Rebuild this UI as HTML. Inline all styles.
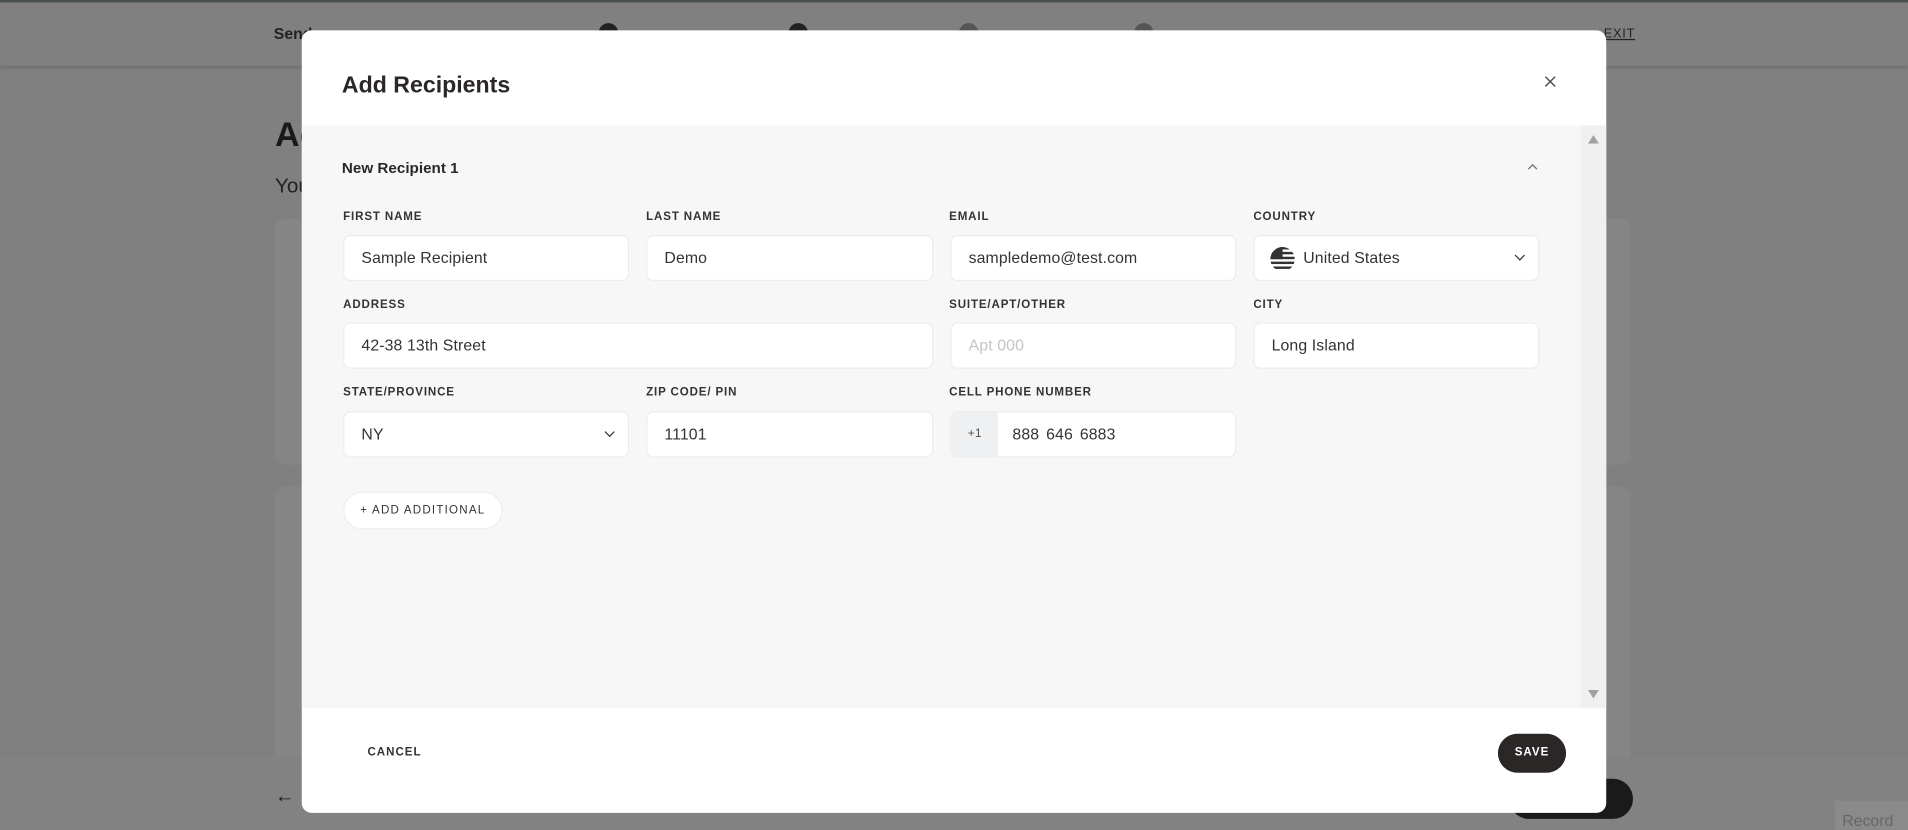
<!DOCTYPE html>
<html><head><meta charset="utf-8"><style>
*{box-sizing:border-box;margin:0;padding:0}
html,body{width:1908px;height:830px;overflow:hidden;background:#808080}
#w{position:absolute;left:0;top:0;width:1568px;height:682px;transform:scale(1.21684);transform-origin:0 0;font-family:"Liberation Sans",sans-serif;color:#2b2727;background:#808080}
.a{position:absolute}
.top{left:0;top:0;width:1568px;height:54px;background:#808080;border-top:2px solid #4a4f4f;box-shadow:0 2px 3px rgba(0,0,0,.15)}
.modal{left:248px;top:25px;width:1072px;height:643px;background:#fff;border-radius:8px;overflow:hidden}
.body{left:0;top:78px;width:1072px;height:479px;background:#f7f7f7}
.sb{left:1051px;top:0;width:21px;height:479px;background:#f0f0f0}
.lbl{position:absolute;font-size:9.5px;font-weight:bold;letter-spacing:.7px;color:#333}
.inp{position:absolute;height:38px;background:#fff;border:1px solid #ececec;border-radius:6px;font-size:13px;color:#333;padding-left:14px;line-height:36px;letter-spacing:.1px}
.chev{position:absolute;right:12px;top:15px;width:6px;height:6px;border-right:1.3px solid #333;border-bottom:1.3px solid #333;transform:rotate(45deg)}
</style></head><body><div id="w">
<div class="a top"></div>
<div class="a" style="left:225px;top:20px;font-size:13px;font-weight:bold;color:#222">Send</div>
<div class="a" style="left:492px;top:19px;width:16px;height:16px;border-radius:50%;background:#222"></div>
<div class="a" style="left:648px;top:19px;width:16px;height:16px;border-radius:50%;background:#222"></div>
<div class="a" style="left:788px;top:19px;width:16px;height:16px;border-radius:50%;background:#555"></div>
<div class="a" style="left:932px;top:19px;width:16px;height:16px;border-radius:50%;background:#555"></div>
<div class="a" style="left:1318px;top:22px;font-size:10.5px;letter-spacing:.6px;text-decoration:underline;color:#222">EXIT</div>
<div class="a" style="left:226px;top:95px;font-size:28px;font-weight:bold;color:#1a1a1a">Ad</div>
<div class="a" style="left:226px;top:143px;font-size:17px;color:#222">You</div>
<div class="a" style="left:226px;top:180px;width:1114px;height:202px;background:#858585;border-radius:8px"></div>
<div class="a" style="left:226px;top:400px;width:1114px;height:230px;background:#858585;border-radius:8px"></div>
<div class="a" style="left:0;top:622px;width:1568px;height:60px;background:#828282"></div>
<div class="a" style="left:226px;top:646px;font-size:16px;color:#111">&larr;</div>
<div class="a" style="left:1240px;top:640px;width:102px;height:33px;border-radius:17px;background:#1a1a1a"></div>
<div class="a" style="left:1508px;top:658px;width:60px;height:24px;background:#8a8a8a;color:#666;font-size:13px;padding:9px 0 0 6px">Record</div>

<div class="a modal">
 <div class="a" style="left:33px;top:35px;font-size:19px;font-weight:bold;color:#2b2727">Add Recipients</div>
 <svg class="a" style="left:1021px;top:37px" width="10" height="10" viewBox="0 0 10 10"><path d="M1 1L9 9M9 1L1 9" stroke="#444" stroke-width="1.1"/></svg>
 <div class="a body">
  <div class="a sb"><svg class="a" style="left:6px;top:8px" width="9" height="7"><path d="M0 7L4.5 0L9 7Z" fill="#a0a0a0"/></svg><svg class="a" style="left:6px;top:464px" width="9" height="7"><path d="M0 0L4.5 7L9 0Z" fill="#a0a0a0"/></svg></div>
  <div class="a" style="left:33px;top:28px;font-size:12.5px;font-weight:bold;color:#2b2727">New Recipient 1</div>
  <svg class="a" style="left:1007px;top:31px" width="9" height="6"><path d="M1 5L4.5 1.5L8 5" stroke="#777" stroke-width="1.1" fill="none"/></svg>
 </div>
</div>

<div class="lbl" style="left:282px;top:173px">FIRST NAME</div>
<div class="lbl" style="left:531px;top:173px">LAST NAME</div>
<div class="lbl" style="left:780px;top:173px">EMAIL</div>
<div class="lbl" style="left:1030px;top:173px">COUNTRY</div>
<div class="inp" style="left:282px;top:193px;width:235px">Sample Recipient</div>
<div class="inp" style="left:531px;top:193px;width:236px">Demo</div>
<div class="inp" style="left:781px;top:193px;width:235px">sampledemo@test.com</div>
<div class="inp" style="left:1030px;top:193px;width:235px;padding-left:40px">United States
 <svg class="a" style="left:13px;top:9px" width="20" height="20" viewBox="0 0 20 20"><clipPath id="c"><circle cx="10" cy="10" r="10"/></clipPath><g clip-path="url(#c)"><rect width="20" height="20" fill="#fff"/><g fill="#333"><rect y="0" width="20" height="2"/><rect y="4" width="20" height="2"/><rect y="8" width="20" height="2"/><rect y="12" width="20" height="2"/><rect y="16" width="20" height="2"/><rect width="10" height="10"/></g></g></svg>
 <div class="chev" style="top:13px"></div></div>

<div class="lbl" style="left:282px;top:245px">ADDRESS</div>
<div class="lbl" style="left:780px;top:245px">SUITE/APT/OTHER</div>
<div class="lbl" style="left:1030px;top:245px">CITY</div>
<div class="inp" style="left:282px;top:265px;width:485px">42-38 13th Street</div>
<div class="inp" style="left:781px;top:265px;width:235px;color:#c4c4c4">Apt 000</div>
<div class="inp" style="left:1030px;top:265px;width:235px">Long Island</div>

<div class="lbl" style="left:282px;top:317px">STATE/PROVINCE</div>
<div class="lbl" style="left:531px;top:317px">ZIP CODE/ PIN</div>
<div class="lbl" style="left:780px;top:317px">CELL PHONE NUMBER</div>
<div class="inp" style="left:282px;top:338px;width:235px">NY<div class="chev" style="top:13px"></div></div>
<div class="inp" style="left:531px;top:338px;width:236px">11101</div>
<div class="inp" style="left:781px;top:338px;width:235px;padding-left:50px;overflow:hidden;word-spacing:2px">888 646 6883
 <div class="a" style="left:0;top:0;width:38px;height:38px;background:#eff0f1;font-size:10px;color:#555;text-align:center;line-height:36px;word-spacing:0">+1</div></div>

<div class="a" style="left:282px;top:404px;width:131px;height:31px;border-radius:16px;background:#fff;border:1px solid #eee;font-size:9.5px;letter-spacing:1px;color:#333;text-align:center;line-height:29px">+ ADD ADDITIONAL</div>

<div class="a" style="left:302px;top:613px;font-size:9.5px;font-weight:bold;letter-spacing:.8px;color:#333">CANCEL</div>
<div class="a" style="left:1231px;top:603px;width:56px;height:32px;border-radius:16px;background:#2b2727;color:#fff;font-size:9.5px;font-weight:bold;letter-spacing:.8px;text-align:center;line-height:32px">SAVE</div>
</div></body></html>
